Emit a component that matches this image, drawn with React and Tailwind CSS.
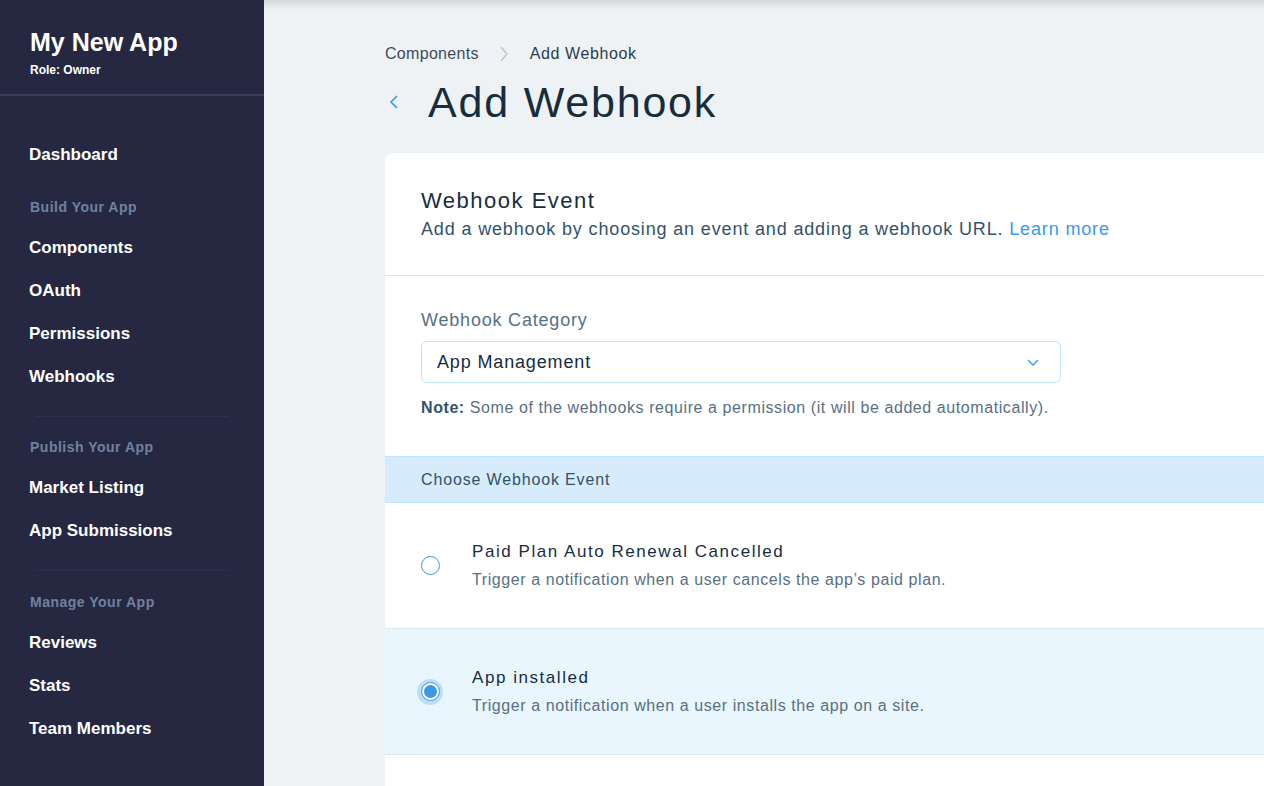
import React, { useState } from "react";

const font = { fontFamily: '"Liberation Sans", Arial, sans-serif' };

const events = [
  {
    id: "renewal",
    title: "Paid Plan Auto Renewal Cancelled",
    desc: "Trigger a notification when a user cancels the app’s paid plan.",
  },
  {
    id: "installed",
    title: "App installed",
    desc: "Trigger a notification when a user installs the app on a site.",
  },
];

function NavItem({ children }) {
  return (
    <div className="h-[43px] flex items-center px-[29px] text-[17px] font-bold">{children}</div>
  );
}

function NavTitle({ children, className }) {
  return (
    <div className={`h-[16px] flex items-center px-[30px] text-[14px] font-bold text-[#6f82a0] tracking-[0.5px] mb-[11.5px] ${className}`}>
      {children}
    </div>
  );
}

function Sidebar() {
  return (
    <aside className="w-[264px] shrink-0 bg-[#252840] text-white min-h-screen">
      <div className="px-[30px] pt-[28px] pb-[17px] border-b-2 border-[#3a3d5c]">
        <h1 className="text-[25px] font-bold leading-[28px]">My New App</h1>
        <p className="text-[12px] font-bold mt-[8px] leading-[13px]">Role: Owner</p>
      </div>
      <nav className="pt-[37.5px]">
        <NavItem>Dashboard</NavItem>
        <NavTitle className="mt-[22.5px]">Build Your App</NavTitle>
        <NavItem>Components</NavItem>
        <NavItem>OAuth</NavItem>
        <NavItem>Permissions</NavItem>
        <NavItem>Webhooks</NavItem>
        <div className="mx-[35px] h-px bg-[#2e3150] mt-[17.5px]" />
        <NavTitle className="mt-[22px]">Publish Your App</NavTitle>
        <NavItem>Market Listing</NavItem>
        <NavItem>App Submissions</NavItem>
        <div className="mx-[35px] h-px bg-[#2e3150] mt-[17.5px]" />
        <NavTitle className="mt-[23px]">Manage Your App</NavTitle>
        <NavItem>Reviews</NavItem>
        <NavItem>Stats</NavItem>
        <NavItem>Team Members</NavItem>
      </nav>
    </aside>
  );
}

function Radio({ checked }) {
  if (checked) {
    return (
      <span className="flex items-center justify-center w-[26px] h-[26px] rounded-full bg-[#b8dffb]">
        <span className="flex items-center justify-center w-[19px] h-[19px] rounded-full bg-white border border-[#3899ec]">
          <span className="w-[13px] h-[13px] rounded-full bg-[#3899ec]" />
        </span>
      </span>
    );
  }
  return (
    <span className="flex items-center justify-center w-[26px] h-[26px]">
      <span className="w-[19px] h-[19px] rounded-full border border-[#3899ec] bg-white" />
    </span>
  );
}

export default function App() {
  const [selected, setSelected] = useState("installed");

  return (
    <div className="flex h-[786px] overflow-hidden bg-[#eff2f5]" style={font}>
      <Sidebar />
      <main className="relative flex-1 overflow-hidden">
        <div className="absolute inset-x-0 top-0 h-[10px] bg-gradient-to-b from-[#d4d9de] to-transparent" />
        <div className="pl-[121px] pt-[44px]">
          <div className="flex items-center text-[16px] leading-[20px] text-[#3b4a5a]">
            <span className="tracking-[0.3px]">Components</span>
            <svg width="10" height="18" viewBox="0 0 10 18" className="ml-[20px] mr-[21px]">
              <path d="M2 2l6 7-6 7" fill="none" stroke="#b6c1cd" strokeWidth="1.2" />
            </svg>
            <span className="text-[#2b3d4f] tracking-[0.6px]">Add Webhook</span>
          </div>
          <div className="flex items-center mt-[12px] h-[52px]">
            <svg width="14" height="20" viewBox="0 0 14 20" className="ml-[2px]">
              <path d="M10 4l-6 6 6 6" fill="none" stroke="#3899ec" strokeWidth="1.6" />
            </svg>
            <h2 className="ml-[27px] text-[43px] leading-[52px] text-[#162d3d] tracking-[1.8px]">Add Webhook</h2>
          </div>

          <div className="mt-[25px] w-[960px] bg-white rounded-tl-[8px]">
            <div className="px-[36px] pt-[34px] pb-[33px] border-b border-[#dfe5eb]">
              <h3 className="text-[22px] leading-[28px] text-[#162d3d] tracking-[1.5px]">Webhook Event</h3>
              <p className="text-[18px] leading-[26px] text-[#32536a] mt-[1px] tracking-[0.85px]">
                Add a webhook by choosing an event and adding a webhook URL.{" "}
                <span className="text-[#3899ec]">Learn more</span>
              </p>
            </div>

            <div className="px-[36px] pt-[32px] pb-[38px]">
              <label className="block text-[18px] leading-[24px] text-[#577083] tracking-[0.8px]">Webhook Category</label>
              <div className="mt-[9px] w-[640px] h-[42px] border border-[#c1e4fe] rounded-[6px] flex items-center justify-between pl-[15px] pr-[20px]">
                <span className="text-[18px] text-[#162d3d] tracking-[0.85px]">App Management</span>
                <svg width="14" height="10" viewBox="0 0 14 10">
                  <path d="M2 3l5 5 5-5" fill="none" stroke="#3899ec" strokeWidth="1.4" />
                </svg>
              </div>
              <p className="mt-[15px] text-[16px] leading-[20px] text-[#577083] tracking-[0.58px]">
                <span className="font-bold text-[#32536a]">Note:</span> Some of the webhooks require a permission (it will be added automatically).
              </p>
            </div>

            <div className="h-[47px] bg-[#d6ecfc] border-y border-[#c1e4fe] px-[36px] flex items-center text-[16px] text-[#32536a] tracking-[0.85px]">
              Choose Webhook Event
            </div>

            {events.map((ev) => {
              const checked = selected === ev.id;
              return (
                <div
                  key={ev.id}
                  onClick={() => setSelected(ev.id)}
                  className={`h-[126px] flex items-center border-b border-[#dfe5eb] pl-[32px] cursor-pointer ${
                    checked ? "bg-[#eaf6fe]" : "bg-white"
                  }`}
                >
                  <Radio checked={checked} />
                  <div className="ml-[29px] -mt-[1px]">
                    <div className="text-[17px] leading-[22px] text-[#162d3d] tracking-[1.55px]">{ev.title}</div>
                    <div className="text-[16px] leading-[20px] text-[#577083] mt-[7px] tracking-[0.58px]">{ev.desc}</div>
                  </div>
                </div>
              );
            })}
            <div className="h-[60px] bg-white" />
          </div>
        </div>
      </main>
    </div>
  );
}
